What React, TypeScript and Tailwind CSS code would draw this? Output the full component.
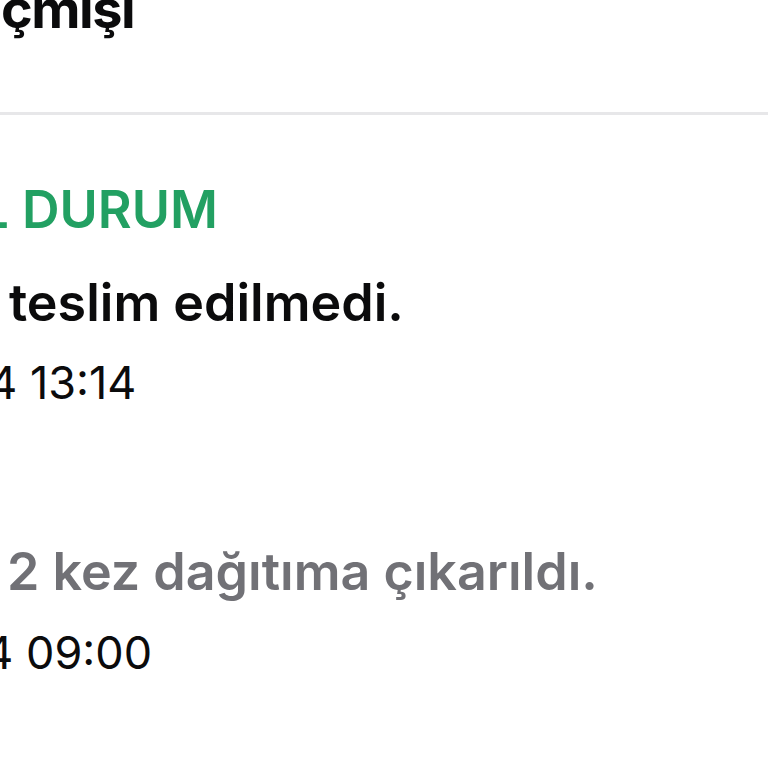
import React from "react";

function Line({
  prefix,
  text,
  edge,
  className,
  textClass = "",
}: {
  prefix: string;
  text: string;
  edge: string;
  className: string;
  textClass?: string;
}) {
  return (
    <div className={`flex whitespace-nowrap ${className}`}>
      <span className={`flex shrink-0 justify-end ${edge}`}>
        <span className="shrink-0 whitespace-pre">{prefix}</span>
      </span>
      <span className={`whitespace-pre ${textClass}`}>{text}</span>
    </div>
  );
}

export default function App() {
  return (
    <div
      className="w-[768px] h-[768px] overflow-hidden bg-white text-[#0b0b0c]"
      style={{ fontFamily: "Inter, 'Noto Sans', sans-serif" }}
    >
      <Line
        prefix="Hareket Ge"
        text="çmişi"
        edge="w-[0px]"
        textClass="ml-[1px] tracking-[-1.5px]"
        className="-mt-[4px] text-[54px] leading-[26px] h-[26px] font-bold"
      />
      <div className="mt-[90px] h-[3px] bg-[#e7e7e9]" />
      <Line
        prefix="GÜNCEL "
        text="DURUM"
        edge="w-[22px]"
        className="mt-[69px] text-[52px] leading-[52px] h-[52px] font-semibold text-[#22a062]"
      />
      <Line
        prefix="Gönderi "
        text="teslim edilmedi."
        edge="w-[9px]"
        className="mt-[41px] text-[52px] leading-[52px] h-[52px] font-semibold"
      />
      <Line
        prefix="12.03.2024 "
        text="13:14"
        edge="w-[30px]"
        className="mt-[31px] text-[45px] leading-[45px] h-[45px] font-normal"
      />
      <Line
        prefix="Gönderi "
        text="2 kez dağıtıma çıkarıldı."
        edge="w-[7px]"
        className="mt-[141px] text-[52px] leading-[52px] h-[52px] font-semibold text-[#717176]"
      />
      <Line
        prefix="11.03.2024 "
        text="09:00"
        edge="w-[26px]"
        className="mt-[32px] text-[45px] leading-[45px] h-[45px] font-normal"
      />
    </div>
  );
}
